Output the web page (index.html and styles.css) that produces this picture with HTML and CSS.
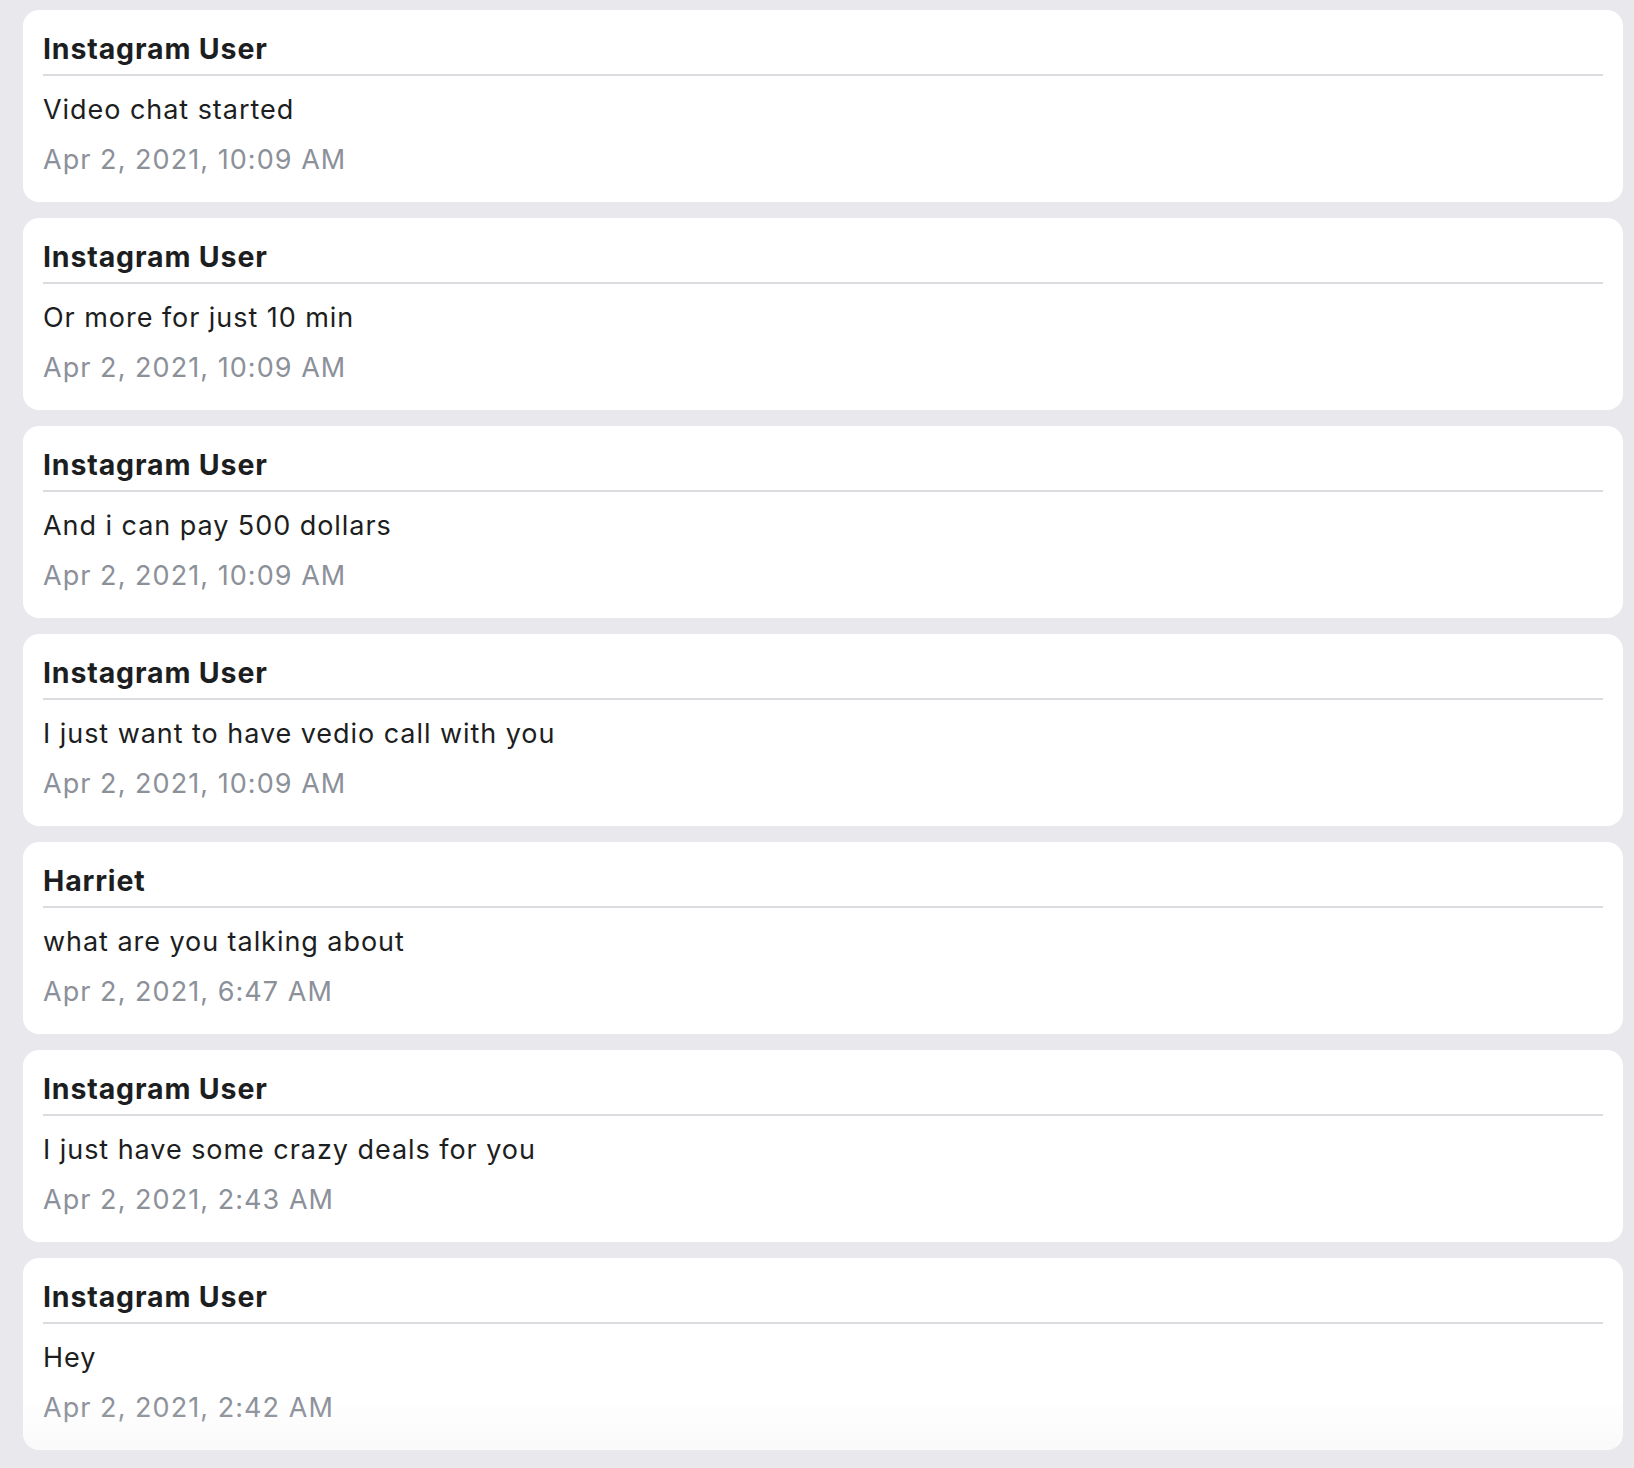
FILE: index.html
```html
<!DOCTYPE html>
<html lang="en">
<head>
<meta charset="utf-8">
<title>Messages</title>
<link rel="stylesheet" href="styles.css">
</head>
<body>
<div class="thread">
  <div class="msg">
    <div class="sender">Instagram User</div>
    <div class="text">Video chat started</div>
    <div class="time">Apr 2, 2021, 10:09 AM</div>
  </div>
  <div class="msg">
    <div class="sender">Instagram User</div>
    <div class="text">Or more for just 10 min</div>
    <div class="time">Apr 2, 2021, 10:09 AM</div>
  </div>
  <div class="msg">
    <div class="sender">Instagram User</div>
    <div class="text">And i can pay 500 dollars</div>
    <div class="time">Apr 2, 2021, 10:09 AM</div>
  </div>
  <div class="msg">
    <div class="sender">Instagram User</div>
    <div class="text">I just want to have vedio call with you</div>
    <div class="time">Apr 2, 2021, 10:09 AM</div>
  </div>
  <div class="msg">
    <div class="sender">Harriet</div>
    <div class="text">what are you talking about</div>
    <div class="time">Apr 2, 2021, 6:47 AM</div>
  </div>
  <div class="msg">
    <div class="sender">Instagram User</div>
    <div class="text">I just have some crazy deals for you</div>
    <div class="time">Apr 2, 2021, 2:43 AM</div>
  </div>
  <div class="msg">
    <div class="sender">Instagram User</div>
    <div class="text">Hey</div>
    <div class="time">Apr 2, 2021, 2:42 AM</div>
  </div>
</div>
<div class="fade"></div>
</body>
</html>
```
FILE: styles.css
```css
html, body {
  margin: 0;
  padding: 0;
}
body {
  background: #e9e9ed;
  font-family: Inter, "Noto Sans", "Liberation Sans", sans-serif;
  color: #1c1e21;
  height: 1468px;
  overflow: hidden;
}
.thread {
  display: flex;
  flex-direction: column;
  gap: 16px;
  padding: 10px 11px 0 23px;
}
.msg {
  background: #ffffff;
  border-radius: 16px;
  height: 192px;
  box-sizing: border-box;
  padding: 21px 20px 0 20px;
}
.sender {
  font-size: 28.5px;
  line-height: 36px;
  font-weight: 700;
  letter-spacing: 0.85px;
  padding-bottom: 7px;
  border-bottom: 2px solid #dcdce0;
}
.text {
  font-size: 27px;
  line-height: 34px;
  letter-spacing: 0.95px;
  margin-top: 17px;
}
.time {
  font-size: 27px;
  line-height: 34px;
  letter-spacing: 1.05px;
  margin-top: 16px;
  color: #8b9099;
}
.fade {
  position: fixed;
  left: 0;
  right: 0;
  bottom: 0;
  height: 70px;
  background: linear-gradient(to bottom, rgba(233,233,237,0), rgba(233,233,237,0.35));
  pointer-events: none;
}
```
